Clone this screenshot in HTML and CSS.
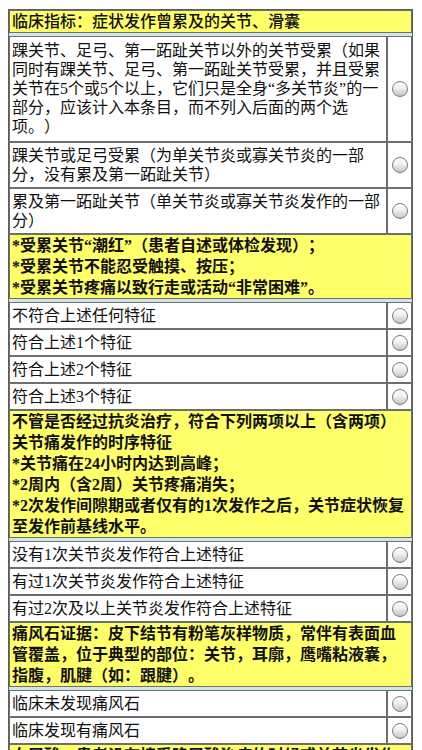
FILE: index.html
```html
<!DOCTYPE html>
<html lang="zh-CN">
<head>
<meta charset="utf-8">
<title>痛风分类标准</title>
<link rel="stylesheet" href="styles.css">
</head>
<body>
<div class="page">
  <div class="note head">临床指标：症状发作曾累及的关节、滑囊</div>
  <div class="gap"></div>
  <div class="opt">
    <div class="txt first">踝关节、足弓、第一跖趾关节以外的关节受累（如果同时有踝关节、足弓、第一跖趾关节受累，并且受累关节在5个或5个以上，它们只是全身“多关节炎”的一部分，应该计入本条目，而不列入后面的两个选项。）</div>
    <div class="rad"><span class="radio"></span></div>
  </div>
  <div class="opt">
    <div class="txt">踝关节或足弓受累（为单关节炎或寡关节炎的一部分，没有累及第一跖趾关节）</div>
    <div class="rad"><span class="radio"></span></div>
  </div>
  <div class="opt">
    <div class="txt">累及第一跖趾关节（单关节炎或寡关节炎发作的一部分）</div>
    <div class="rad"><span class="radio"></span></div>
  </div>
  <div class="note">*受累关节“潮红”（患者自述或体检发现）；<br>*受累关节不能忍受触摸、按压；<br>*受累关节疼痛以致行走或活动“非常困难”。</div>
  <div class="gap"></div>
  <div class="opt">
    <div class="txt">不符合上述任何特征</div>
    <div class="rad"><span class="radio"></span></div>
  </div>
  <div class="opt">
    <div class="txt">符合上述1个特征</div>
    <div class="rad"><span class="radio"></span></div>
  </div>
  <div class="opt">
    <div class="txt">符合上述2个特征</div>
    <div class="rad"><span class="radio"></span></div>
  </div>
  <div class="opt">
    <div class="txt">符合上述3个特征</div>
    <div class="rad"><span class="radio"></span></div>
  </div>
  <div class="note">不管是否经过抗炎治疗，符合下列两项以上（含两项）<br>关节痛发作的时序特征<br>*关节痛在24小时内达到高峰；<br>*2周内（含2周）关节疼痛消失；<br>*2次发作间隙期或者仅有的1次发作之后，关节症状恢复至发作前基线水平。</div>
  <div class="gap"></div>
  <div class="opt">
    <div class="txt">没有1次关节炎发作符合上述特征</div>
    <div class="rad"><span class="radio"></span></div>
  </div>
  <div class="opt">
    <div class="txt">有过1次关节炎发作符合上述特征</div>
    <div class="rad"><span class="radio"></span></div>
  </div>
  <div class="opt">
    <div class="txt">有过2次及以上关节炎发作符合上述特征</div>
    <div class="rad"><span class="radio"></span></div>
  </div>
  <div class="note">痛风石证据：皮下结节有粉笔灰样物质，常伴有表面血管覆盖，位于典型的部位：关节，耳廓，鹰嘴粘液囊，指腹，肌腱（如：跟腱）。</div>
  <div class="gap"></div>
  <div class="opt">
    <div class="txt">临床未发现痛风石</div>
    <div class="rad"><span class="radio"></span></div>
  </div>
  <div class="opt">
    <div class="txt">临床发现有痛风石</div>
    <div class="rad"><span class="radio"></span></div>
  </div>
  <div class="note">血尿酸：患者没有接受降尿酸治疗的时候或关节炎发作后4周进行检测。</div>
</div>
</body>
</html>
```

FILE: styles.css
```css
html, body {
  background: #ffffff;
}
body {
  margin: 9px 8px 0 8px;
  font-family: "Liberation Serif", "Noto Sans CJK SC", serif;
  font-size: 16px;
  color: #111111;
  text-spacing-trim: space-all;
}
.page {
  width: 403px;
  border: 1px solid #5e5e5e;
  background: #cfe7ea;
}
.note {
  background: #ffff6a;
  border: 1px solid #6e6e6e;
  padding: 0 2px;
  line-height: 21px;
  font-weight: bold;
}
.note.head {
  font-weight: 500;
}
.gap {
  height: 3px;
}
.opt {
  display: flex;
  background: #ffffff;
}
.txt {
  flex: 1;
  border: 1px solid #6e6e6e;
  padding: 3px 2px;
  line-height: 19px;
}
.txt.first {
  padding: 4px 2px 5px;
}
.rad {
  width: 23px;
  border: 1px solid #6e6e6e;
  display: flex;
  align-items: center;
  justify-content: center;
}
.radio {
  width: 16px;
  height: 16px;
  border-radius: 50%;
  border: 1px solid #7c7c7c;
  background: linear-gradient(#ffffff 0%, #f2f2f2 40%, #c4c4c4 100%);
  box-sizing: border-box;
}
```
